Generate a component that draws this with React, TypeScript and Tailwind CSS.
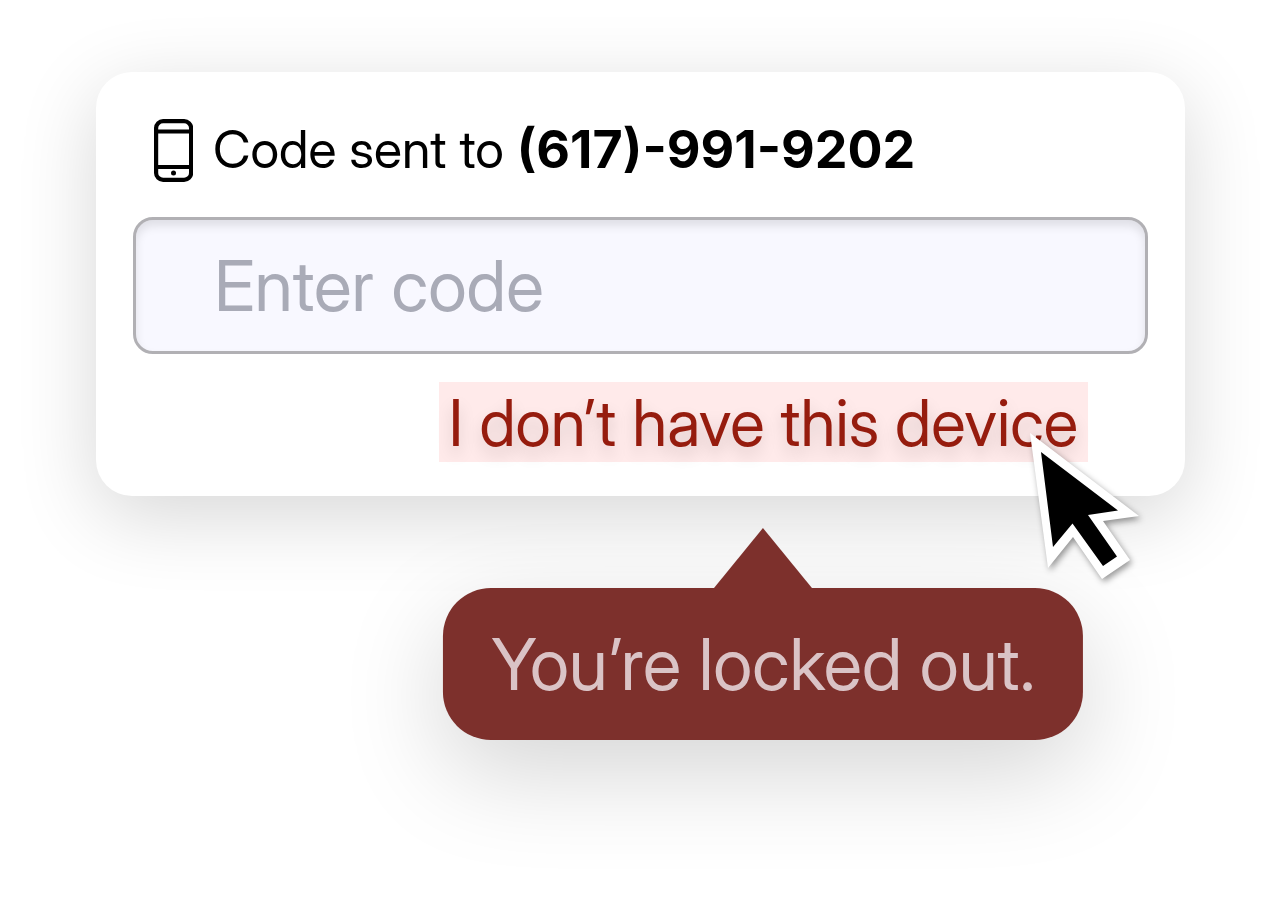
import React from 'react';

interface CalloutProps {
  message: string;
}

const PhoneIcon: React.FC = () => (
  <svg className="h-[63px] w-10 shrink-0" viewBox="0 0 40 63" fill="none" stroke="#000" strokeWidth="4.2" aria-hidden="true">
    <rect x="3.100" y="2.100" width="35" height="58.800" rx="7" />
    <path d="M3 12.500h35M3 48h35" />
    <circle cx="20.500" cy="54" r="2.500" fill="#000" stroke="none" />
  </svg>
);

const Cursor: React.FC = () => (
  <svg
    className="pointer-events-none absolute top-[50px] -right-[52px] h-[148px] w-[112px] drop-shadow-[2px_3px_3px_rgba(0,0,0,0.4)]"
    viewBox="1028 432 112 148"
    aria-hidden="true"
  >
    <path d="M1030 433 1139 516 1103 521 1130 560 1102 579 1073 537 1048 568Z" fill="#fff" />
    <path d="M1041 452 1118 510.500 1088 515 1117 556.500 1103 566 1072.500 523.500 1053 547Z" fill="#000" />
  </svg>
);

const Callout: React.FC<CalloutProps> = ({ message }) => (
  <div
    role="tooltip"
    id="lockout"
    className="absolute top-[206px] left-1/2 -translate-x-1/2 rounded-[48px] bg-[#7d302c] px-12 py-8 text-[71px] leading-[88px] whitespace-nowrap text-[#dac3c6] shadow-[0_32px_100px_rgba(0,0,0,0.17)]"
  >
    <svg className="absolute bottom-full left-1/2 h-[60px] w-[98px] -translate-x-1/2" viewBox="0 0 98 60" aria-hidden="true">
      <path d="M49 0 98 60H0Z" fill="#7d302c" />
    </svg>
    {message}
  </div>
);

const App: React.FC = () => {
  return (
    <main className="min-h-screen overflow-hidden bg-white px-24 py-[72px] font-['Inter_Display','Inter',sans-serif]">
      <form className="flex flex-col rounded-[36px] bg-white px-[37px] pt-[46px] pb-[34px] shadow-[0_20px_80px_rgba(0,0,0,0.16)]">
        <label htmlFor="code" className="flex items-center gap-5 px-5 text-[52px] leading-[64px] whitespace-nowrap text-black">
          <PhoneIcon />
          <span>
            Code sent to <strong className="font-['Inter',sans-serif] font-bold">(617)-991-9202</strong>
          </span>
        </label>

        <input
          id="code"
          type="text"
          inputMode="numeric"
          autoComplete="one-time-code"
          placeholder="Enter code"
          className="mt-[35px] h-[137px] w-full rounded-[20px] border-3 border-[#b1b0b4] bg-[#f8f8ff] px-[78px] text-[70px] text-black shadow-[inset_0_6px_10px_rgba(0,0,0,0.1)] outline-none placeholder:text-[#a9abb7]"
        />

        <div className="relative mt-7 mr-[60px] self-end">
          <a
            href="#no-device"
            aria-describedby="lockout"
            className="block h-20 bg-[#ffeaea] px-[10px] text-[64px] leading-[82px] whitespace-nowrap text-[#961c0e] [text-shadow:0_8px_16px_rgba(0,0,0,0.15)]"
          >
            I don’t have this device
          </a>
          <Callout message="You’re locked out." />
          <Cursor />
        </div>
      </form>
    </main>
  );
};

export default App;
